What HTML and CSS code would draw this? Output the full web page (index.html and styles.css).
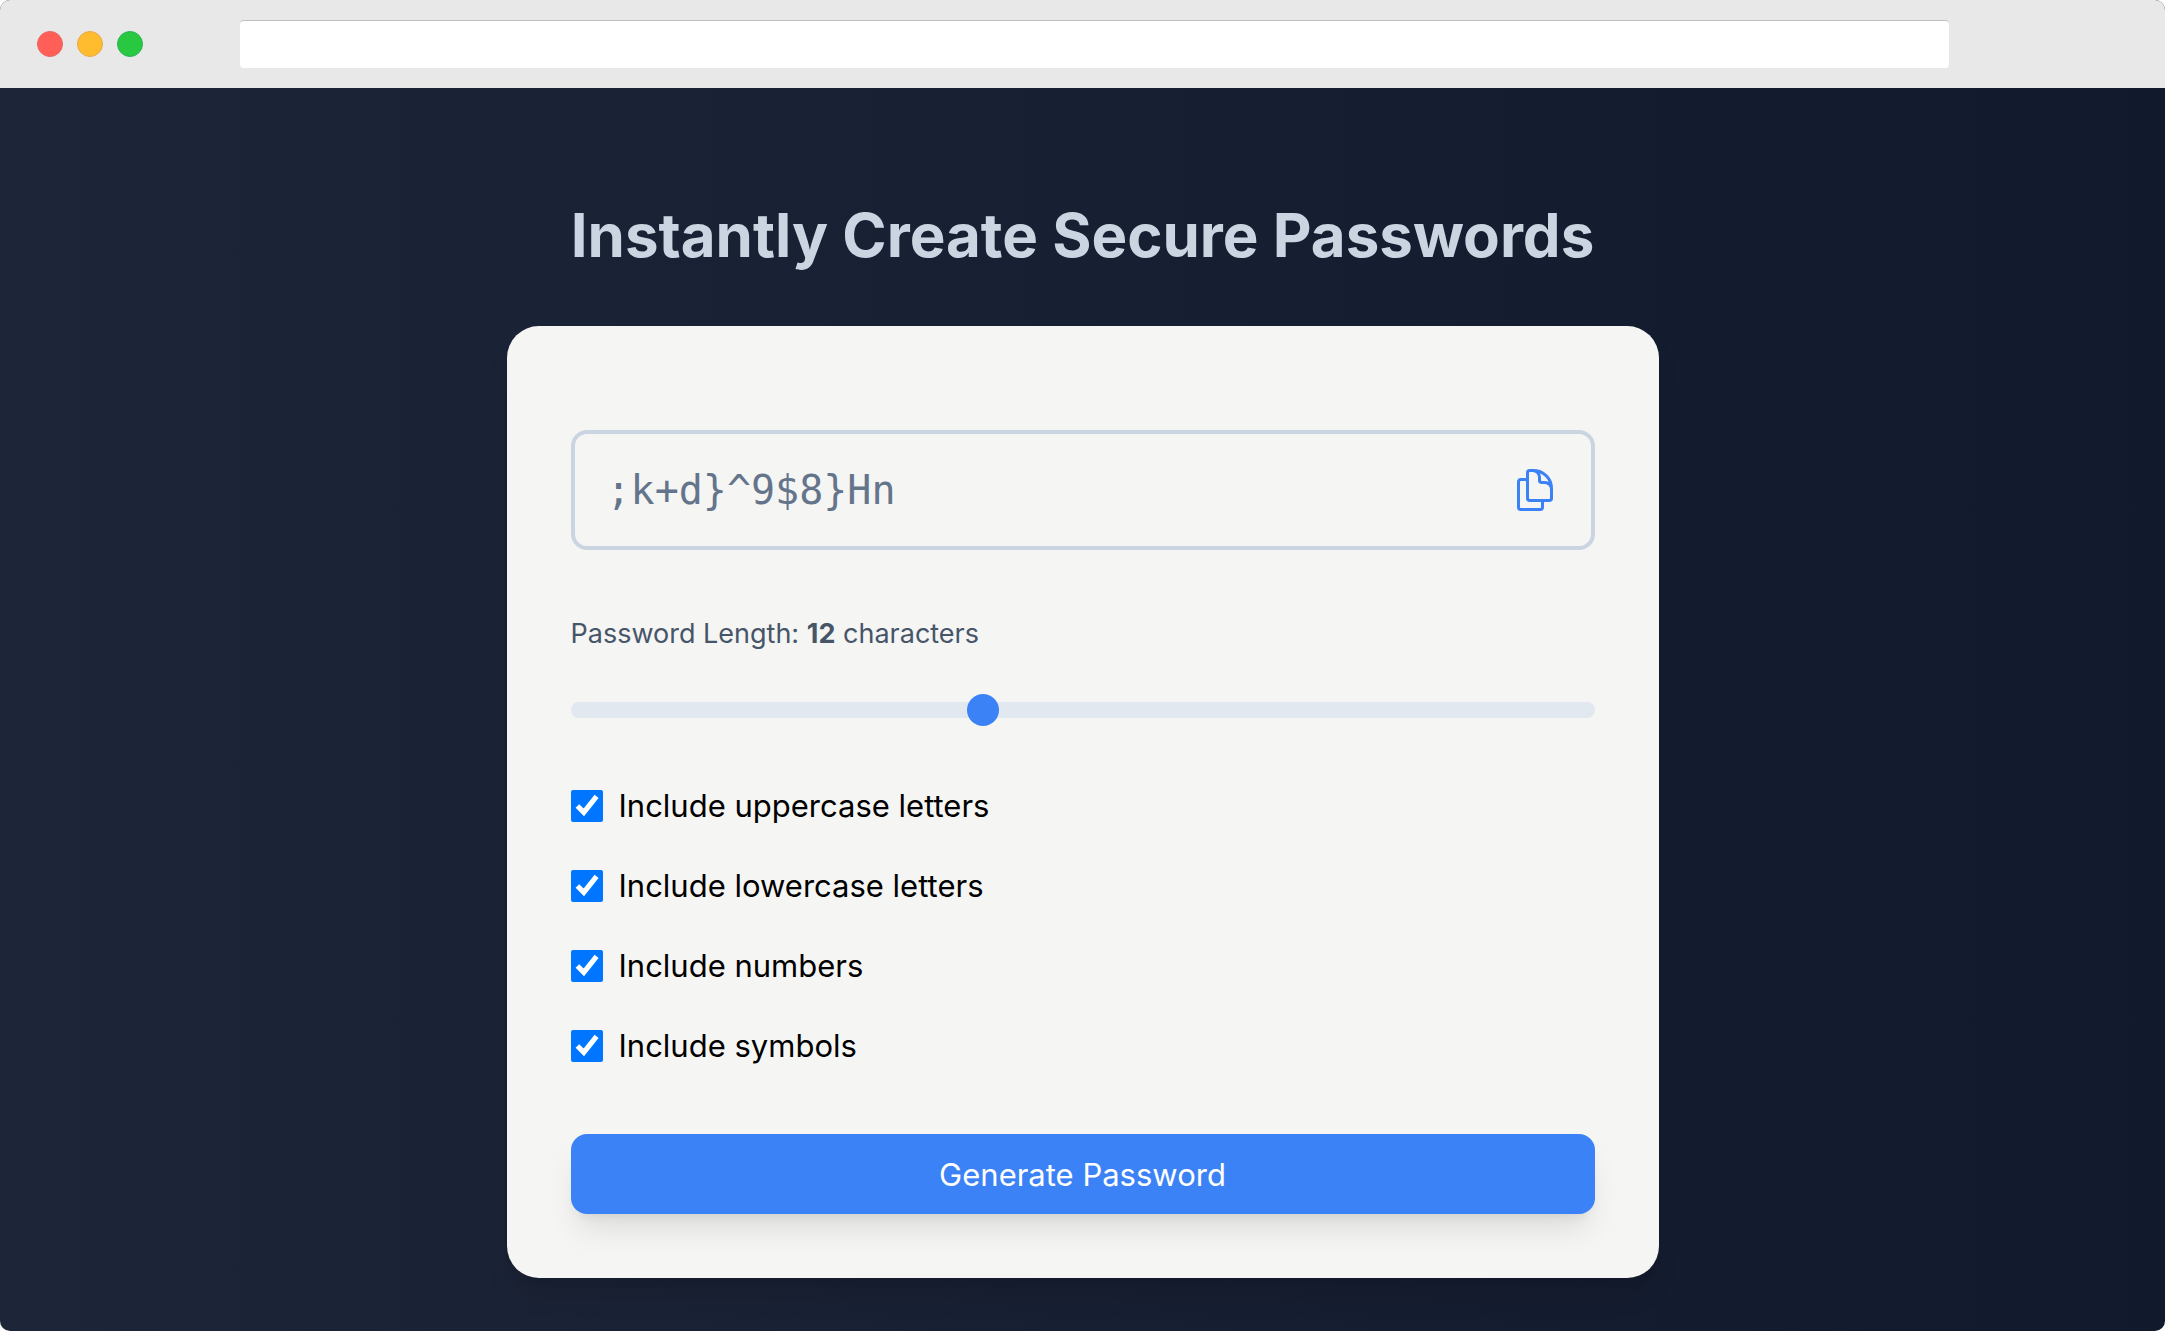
FILE: index.html
```html
<!DOCTYPE html>
<html lang="en">
<head>
  <meta charset="utf-8">
  <meta name="viewport" content="width=device-width, initial-scale=1">
  <title>Password Generator</title>
  <link rel="stylesheet" href="styles.css">
</head>
<body>
  <div class="window">
    <header class="titlebar">
      <div class="lights">
        <span class="light light-close"></span>
        <span class="light light-minimize"></span>
        <span class="light light-zoom"></span>
      </div>
      <input class="address" type="text" aria-label="Address">
    </header>
    <main class="page">
      <h1 class="title">Instantly Create Secure Passwords</h1>
      <form class="card">
        <div class="password">
          <input class="password-text" type="text" value=";k+d}^9$8}Hn" aria-label="Generated password" spellcheck="false" readonly>
          <button class="copy" type="button" aria-label="Copy password">
            <svg class="copy-icon" viewBox="0 0 24 24" fill="none" stroke="currentColor" stroke-width="1.5" stroke-linecap="round" stroke-linejoin="round" aria-hidden="true">
              <path d="M15.75 17.25v3.375c0 .621-.504 1.125-1.125 1.125h-9.75a1.125 1.125 0 0 1-1.125-1.125V7.875c0-.621.504-1.125 1.125-1.125H6.75a9.06 9.06 0 0 1 1.5.124m7.5 10.376h3.375c.621 0 1.125-.504 1.125-1.125V11.25c0-4.46-3.243-8.161-7.5-8.876a9.06 9.06 0 0 0-1.5-.124H9.375c-.621 0-1.125.504-1.125 1.125v3.5m7.5 10.375H9.375a1.125 1.125 0 0 1-1.125-1.125v-9.25m12 6.625v-1.875a3.375 3.375 0 0 0-3.375-3.375h-1.5a1.125 1.125 0 0 1-1.125-1.125v-1.5a3.375 3.375 0 0 0-3.375-3.375H9.75"/>
            </svg>
          </button>
        </div>
        <div class="length">
          <label class="length-label" for="length">Password Length: <strong>12</strong> characters</label>
          <input class="slider" id="length" type="range" min="4" max="24" value="12">
        </div>
        <div class="options">
          <label class="option"><input class="tick" type="checkbox" checked>Include uppercase letters</label>
          <label class="option"><input class="tick" type="checkbox" checked>Include lowercase letters</label>
          <label class="option"><input class="tick" type="checkbox" checked>Include numbers</label>
          <label class="option"><input class="tick" type="checkbox" checked>Include symbols</label>
        </div>
        <button class="generate" type="button">Generate Password</button>
      </form>
    </main>
  </div>
</body>
</html>
```
FILE: styles.css
```css
* {
  box-sizing: border-box;
}

body {
  margin: 0;
  background: #fff;
  font-family: Inter, "Liberation Sans", sans-serif;
}

.window {
  display: flex;
  flex-direction: column;
  min-height: 100vh;
  border-radius: 10px;
  overflow: hidden;
  background: linear-gradient(to right, #1d2538, #11192c);
}

.titlebar {
  display: flex;
  align-items: center;
  gap: 97px;
  height: 88px;
  padding: 0 216px 0 37px;
  background: #e8e8e8;
}

.lights {
  display: flex;
  gap: 14px;
}

.light {
  width: 26px;
  height: 26px;
  border: 1px solid;
  border-radius: 50%;
}

.light-close {
  background: #ff5f57;
  border-color: #e9655f;
}

.light-minimize {
  background: #febc2e;
  border-color: #e8a848;
}

.light-zoom {
  background: #28c840;
  border-color: #2db455;
}

.address {
  flex: 1;
  min-width: 0;
  height: 48px;
  padding: 0 16px;
  border: 0;
  border-top: 1px solid #bfbfbf;
  border-radius: 4px;
  background: #fff;
  font: inherit;
}

.page {
  display: flex;
  flex-direction: column;
  align-items: center;
  gap: 56px;
  padding: 112px 32px 52px;
}

.title {
  margin: 0;
  color: #cbd5e1;
  font-size: 60px;
  font-weight: 700;
  line-height: 70px;
}

.card {
  width: 100%;
  max-width: 1152px;
  padding: 104px 64px 64px;
  border-radius: 32px;
  background: #f5f5f4;
  box-shadow: 0 20px 30px -6px rgb(0 0 0 / 10%), 0 8px 12px -8px rgb(0 0 0 / 10%);
}

.password {
  display: flex;
  align-items: center;
  height: 120px;
  padding: 0 32px;
  border: 4px solid #cbd5e1;
  border-radius: 16px;
}

.password-text {
  flex: 1;
  min-width: 0;
  padding: 0;
  border: 0;
  outline: 0;
  background: none;
  color: #64748b;
  font-family: "DejaVu Sans Mono", monospace;
  font-size: 40px;
  line-height: 56px;
}

.copy {
  display: flex;
  padding: 0;
  border: 0;
  background: none;
  color: #3b82f6;
  cursor: pointer;
}

.copy-icon {
  width: 48px;
  height: 48px;
}

.length {
  display: flex;
  flex-direction: column;
  gap: 48px;
  margin-top: 64px;
}

.length-label {
  color: #475569;
  font-size: 27px;
  line-height: 40px;
}

.slider {
  appearance: none;
  width: 100%;
  height: 16px;
  margin: 0;
  border-radius: 8px;
  background: #e2e8f0;
}

.slider::-webkit-slider-thumb {
  appearance: none;
  width: 32px;
  height: 32px;
  border: 0;
  border-radius: 50%;
  background: #3b82f6;
}

.options {
  display: flex;
  flex-direction: column;
  align-items: flex-start;
  gap: 32px;
  margin-top: 64px;
}

.option {
  display: flex;
  align-items: center;
  gap: 16px;
  color: #000;
  font-size: 31px;
  line-height: 48px;
}

.tick {
  width: 32px;
  height: 32px;
  margin: 0;
  accent-color: #0075ff;
}

.generate {
  display: block;
  width: 100%;
  height: 80px;
  margin-top: 64px;
  border: 0;
  border-radius: 16px;
  background: #3b82f6;
  box-shadow: 0 20px 30px -6px rgb(0 0 0 / 10%), 0 8px 12px -8px rgb(0 0 0 / 10%);
  color: #fff;
  font: inherit;
  font-size: 31px;
  cursor: pointer;
}
```
